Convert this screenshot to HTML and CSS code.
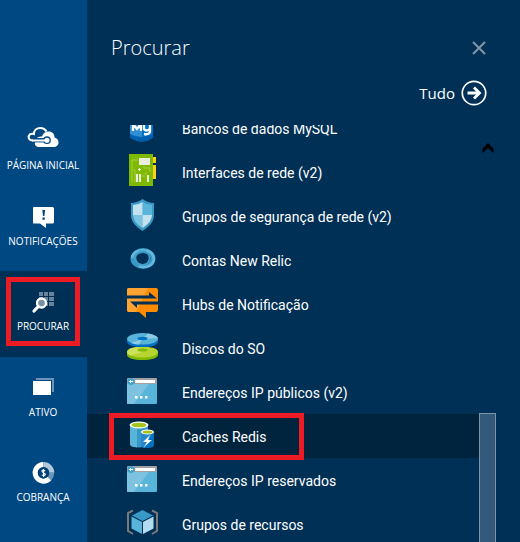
FILE: index.html
```html
<!DOCTYPE html>
<html lang="pt-BR">
<head>
<meta charset="utf-8">
<title>Procurar</title>
<link rel="stylesheet" href="styles.css">
</head>
<body>
<nav class="hub">
  <a class="hub-item first" href="#">
    <svg class="hub-icon" viewBox="0 0 34 24"><path d="M7 15.500C3 15.500 1.800 12.500 3 10.500C4 8.800 6 8.500 7.800 9C8 5 11 3 14.300 3C17 3 19 4 20.500 6.500" fill="none" stroke="#fff" stroke-width="2.200"/><path d="M13 22C9.500 22 8.500 19.500 9 17C9.500 12.500 13 11.500 16 11.500C17 8 19.500 6.500 22.500 6.500C26.500 6.500 28.500 9 28.500 12.500C31 13 32.500 15 32.500 17.500C32.500 20 30.500 22 27.500 22Z" fill="#fff"/><path d="M8 15.200H19" stroke="#004882" stroke-width="4.400"/><circle cx="21" cy="15.200" r="3.200" fill="#fff" stroke="#004882" stroke-width="1.300"/><path d="M6 15.500H20" stroke="#fff" stroke-width="2"/></svg>
    <span>PÁGINA INICIAL</span>
  </a>
  <a class="hub-item" href="#">
    <svg class="hub-icon" viewBox="0 0 34 24"><path d="M7.500 2H26.500Q28 2 28 3.500V17Q28 18.500 26.500 18.500H20V23L14 18.500H7.500Q7 18.500 7 17V3.500Q7 2 7.500 2Z" fill="#fff"/><path d="M16.300 5h2.800l-.7 6h-1.400zM16.500 12.500h2.300v2.300h-2.300z" fill="#004882"/></svg>
    <span>NOTIFICAÇÕES</span>
  </a>
  <a class="hub-item active" href="#">
    <svg class="hub-icon" viewBox="0 0 34 24"><path d="M13 2h4v4h-4zM18 2h4v4h-4zM23 2h5v4h-5zM13 7h4v4h-4zM18 7h4v4h-4zM23 7h5v4h-5zM18 12h4v4h-4zM23 12h5v4h-5z" fill="#68849c"/><circle cx="15.500" cy="13" r="4.500" fill="#7891a6" stroke="#fff" stroke-width="2.300"/><path d="M12.300 16.500L8 21" stroke="#fff" stroke-width="3.200" stroke-linecap="round"/></svg>
    <span>PROCURAR</span>
  </a>
  <a class="hub-item" href="#">
    <svg class="hub-icon" viewBox="0 0 34 24"><path d="M10 2H28V16H26V4H10Z" fill="#6b93b8"/><path d="M7 5H25V19H7Z" fill="#fff"/></svg>
    <span>ATIVO</span>
  </a>
  <a class="hub-item" href="#">
    <svg class="hub-icon" viewBox="0 0 34 24"><g fill="none" stroke-width="5"><path d="M17.500 3.500A8.300 8.300 0 1 0 23.500 17.500" stroke="#fff"/><path d="M17.500 3.500A8.300 8.300 0 0 1 25.800 11.800" stroke="#b3c8da"/><path d="M25.800 11.800A8.300 8.300 0 0 1 23.500 17.500" stroke="#6b93b8"/></g><circle cx="17.500" cy="11.800" r="5.600" fill="#00407a"/><path d="M19.300 9.700Q16 8.400 16 10.300C16 11.900 19.300 11.600 19.300 13.400Q19 15 15.700 14M17.600 8V16" fill="none" stroke="#fff" stroke-width="1.200"/></svg>
    <span>COBRANÇA</span>
  </a>
</nav>
<main class="panel">
  <header class="panel-head">
    <h1>Procurar</h1>
    <button class="close" type="button" aria-label="Fechar"><svg viewBox="0 0 14 14"><path d="M1 1L13 13M13 1L1 13" stroke="#8296a8" stroke-width="2"/></svg></button>
  </header>
  <a class="all" href="#">Tudo
    <svg viewBox="0 0 26 26"><circle cx="13" cy="13" r="11.700" fill="none" stroke="#fff" stroke-width="1.700"/><path d="M6.500 13H18M13 7.500L18.500 13L13 18.500" fill="none" stroke="#fff" stroke-width="2.800"/></svg>
  </a>
  <div class="browser">
    <ul class="list">
      <li><a class="row" href="#"><svg viewBox="0 0 32 32"><path d="M4 6L16 1L27 6V25Q16 34 4 25Z" fill="#0072c6"/><path d="M4 6L16 1V29Q9 29 4 25Z" fill="#2f8fd4"/><path d="M4 22Q16 28 27 22V26Q16 33 4 26Z" fill="#0060b0"/><path d="M7 19V12L11 17L15 12V19M18 13V17Q20 20 24 17M24 13V20Q23 23 18 22" fill="none" stroke="#fff" stroke-width="2.300"/></svg><span>Bancos de dados MySQL</span></a></li>
      <li><a class="row" href="#"><svg viewBox="0 0 32 32"><path d="M26 1h4v6h-4zM26 9h4v14h-4z" fill="#fcd116"/><path d="M3-2H27V30H3Z" fill="#7fba00"/><path d="M6 26V4H12M9 26V14H7M18 10V12H24V16M20 16V19M14 20H19" fill="none" stroke="#a4cf42"/><path d="M13 2h11v7h-11zM10 18h2v8h-2zM13 18h2v8h-2zM21 19h2v7h-2zM12 13h3v1h-3zM13 12h1v3h-1z" fill="#e9eedf"/></svg><span>Interfaces de rede (v2)</span></a></li>
      <li><a class="row" href="#"><svg viewBox="0 0 32 32"><path d="M16.500-1Q22 3 28 3V15C28 23 22 27 16.500 31C11 27 5 23 5 15V3Q11 3 16.500-1Z" fill="#3999c6"/><path d="M16.500 2Q21 5 26 5V15H16.500Z" fill="#59b4d9"/><path d="M16.500 2Q12 5 7 5V15H16.500Z" fill="#c4e1ef"/><path d="M7 15H16.500V28Q7 22 7 15Z" fill="#7cc4e2"/><path d="M26 15H16.500V28Q26 22 26 15Z" fill="#c4e1ef"/></svg><span>Grupos de segurança de rede (v2)</span></a></li>
      <li><a class="row" href="#"><svg viewBox="0 0 32 32"><ellipse cx="17" cy="14.500" rx="10" ry="8" fill="none" stroke="#3999c6" stroke-width="5"/><path d="M6 14C7 7 15 5 21 7C27 8 29 14 27 18C25 23 18 24 13 22" fill="none" stroke="#66b8dc" stroke-width="2.500"/><circle cx="16.500" cy="14" r="7" fill="none" stroke="#429fce" stroke-width="1.500"/></svg><span>Contas New Relic</span></a></li>
      <li><a class="row" href="#"><svg viewBox="0 0 32 32"><path d="M3 0H30Q32 0 32 2V21Q32 24 30 24H20V30L13 24H3Q1 24 1 22V2Q1 0 3 0Z" fill="#ff8c00"/><path d="M3 0H22L10 24H3Q1 24 1 22V2Q1 0 3 0Z" fill="#ffa333"/><path d="M1 7.500H23V4L31 10.500H1ZM32 13.500H4L11 20V16.500H32Z" fill="#003056"/></svg><span>Hubs de Notificação</span></a></li>
      <li><a class="row" href="#"><svg viewBox="0 0 32 32"><path d="M1 20V23C1 26 8 28 16.500 28S32 26 32 23V20Z" fill="#7fba00"/><ellipse cx="16.500" cy="20" rx="15.500" ry="5.500" fill="#b8d432"/><path d="M16.500 20L5 23.500Q1 22 1 20Q2 16 11 15Z" fill="#cae35b"/><path d="M1 7V10C1 13 8 15 16.500 15S32 13 32 10V7Z" fill="#0072c6"/><ellipse cx="16.500" cy="6.800" rx="15.500" ry="5.800" fill="#59b4d9"/><path d="M16.500 7L22 1.500Q30 3 32 6ZM16.500 7L5 11Q9 12.500 13 12.500Z" fill="#8fcbe6"/><ellipse cx="16.500" cy="6.500" rx="5" ry="1.700" fill="#0072c6"/><ellipse cx="16.500" cy="18" rx="5" ry="1.500" fill="#7fba00"/></svg><span>Discos do SO</span></a></li>
      <li><a class="row" href="#"><svg viewBox="0 0 32 32"><path d="M1 8H31V27Q31 28 30 28H2Q1 28 1 27Z" fill="#59b4d9"/><path d="M1 8H23L8 28H2Q1 28 1 27Z" fill="#7dc3e1"/><path d="M2 2H30Q31 2 31 3V8H1V3Q1 2 2 2Z" fill="#a0a1a2"/><path d="M9 4h20v3h-20z" fill="#fff"/><circle cx="5" cy="5.500" r="3.500" fill="#3fa3d1"/><path d="M3 5.500H7M5 4L3.500 5.500L5 7" stroke="#fff" fill="none"/><path d="M9 20h2.500v2.500h-2.500zM14 20h2.500v2.500h-2.500zM19 20h2.500v2.500h-2.500z" fill="#fff"/></svg><span>Endereços IP públicos (v2)</span></a></li>
      <li><a class="row selected" href="#"><svg viewBox="0 0 32 32"><path d="M4 5V24Q4 27 13 27.500Q22 27 22 24V5Z" fill="#3999c6"/><path d="M4 5V24Q4 27 11 27.500V5Z" fill="#59b4d9"/><ellipse cx="13" cy="5" rx="9.500" ry="3.500" fill="#fff"/><ellipse cx="13" cy="5" rx="7.500" ry="2.300" fill="#a3c51a"/><path d="M15 12V25Q16 28 21 28Q28 28 28 25V12Z" fill="#0072c6"/><path d="M15 12V25Q15 28 19 28L27 12Z" fill="#2787d0"/><ellipse cx="21.500" cy="12" rx="6.500" ry="2.500" fill="#fff"/><ellipse cx="21.500" cy="12" rx="5" ry="1.500" fill="#a3c51a"/><path d="M24 15L17 22H21L18 27L26 20H22Z" fill="#fff"/></svg><span>Caches Redis</span></a></li>
      <li><a class="row" href="#"><svg viewBox="0 0 32 32"><path d="M1 8H31V27Q31 28 30 28H2Q1 28 1 27Z" fill="#59b4d9"/><path d="M1 8H23L8 28H2Q1 28 1 27Z" fill="#7dc3e1"/><path d="M2 2H30Q31 2 31 3V8H1V3Q1 2 2 2Z" fill="#a0a1a2"/><path d="M9 4h20v3h-20z" fill="#fff"/><circle cx="5" cy="5.500" r="3.500" fill="#3fa3d1"/><path d="M3 5.500H7M5 4L3.500 5.500L5 7" stroke="#fff" fill="none"/><path d="M9 20h2.500v2.500h-2.500zM14 20h2.500v2.500h-2.500zM19 20h2.500v2.500h-2.500z" fill="#fff"/></svg><span>Endereços IP reservados</span></a></li>
      <li><a class="row" href="#"><svg viewBox="0 0 32 32"><path d="M7 2.500L2 5V23L7 26M26 2.500L31 5V23L26 26" fill="none" stroke="#7a7a7a" stroke-width="2"/><path d="M16.500 2L27 7.500L16.500 13L6 7.500Z" fill="#3999c6"/><path d="M5.500 8.500L16 14V26L5.500 20.500Z" fill="#59b4d9"/><path d="M27.500 8.500L17 14V26L27.500 20.500Z" fill="#b5dcee"/></svg><span>Grupos de recursos</span></a></li>
    </ul>
    <div class="track">
      <button class="up" type="button" aria-label="Rolar para cima"><svg viewBox="0 0 12 10"><path d="M6 0L11.500 5.500V10L6 5L.5 10V5.500Z" fill="#000"/></svg></button>
      <div class="thumb"></div>
    </div>
  </div>
</main>
</body>
</html>
```
FILE: styles.css
```css
*,
*::after {
  box-sizing: border-box;
}

body {
  margin: 0;
  height: 100vh;
  display: flex;
  overflow: hidden;
  background: #003056;
  color: #fff;
  font-family: "Open Sans", "Noto Sans", sans-serif;
}

a {
  color: inherit;
  text-decoration: none;
}

button {
  padding: 0;
  border: 0;
  background: none;
}

svg {
  display: block;
  overflow: visible;
}

.hub {
  flex: 0 0 87px;
  display: flex;
  flex-direction: column;
  padding-top: 110px;
  background: #004882;
}

.hub-item {
  position: relative;
  flex: 0 0 85px;
  display: flex;
  flex-direction: column;
  align-items: center;
  gap: 4px;
  padding: 19px 1px 0 0;
  font-size: 10px;
  line-height: 16px;
  white-space: nowrap;
}

.hub-item.first {
  flex-basis: 76px;
  padding-top: 15px;
  gap: 8px;
}

.hub-item.active {
  flex-basis: 86px;
  background: #003056;
}

.hub-item.active::after {
  content: "";
  position: absolute;
  inset: 6px 7px 11px 6px;
  border: 5px solid #ed1c24;
}

.hub-icon {
  width: 34px;
  height: 24px;
}

.panel {
  flex: 1;
  min-width: 0;
  display: flex;
  flex-direction: column;
  padding: 32px 24px 0 0;
}

.panel-head {
  display: flex;
  align-items: center;
  justify-content: space-between;
  padding: 0 10px 0 24px;
}

h1 {
  margin: 0;
  font-size: 20px;
  font-weight: 300;
  line-height: 32px;
}

.close,
.close svg {
  width: 14px;
  height: 14px;
}

.all {
  align-self: flex-end;
  display: flex;
  align-items: center;
  gap: 6px;
  margin: 16px 9px 19px 0;
  font-size: 15px;
  line-height: 26px;
}

.all svg {
  width: 26px;
  height: 26px;
}

.browser {
  flex: 1;
  min-height: 0;
  display: flex;
  overflow: hidden;
}

.list {
  flex: 1;
  margin: -19px 0 0;
  padding: 0;
  list-style: none;
}

.row {
  position: relative;
  display: flex;
  align-items: center;
  gap: 24px;
  height: 44px;
  padding-left: 39px;
  font-family: Roboto, "Open Sans", sans-serif;
  font-size: 14px;
  white-space: nowrap;
}

.row span {
  padding-top: 2px;
}

.row svg {
  flex: none;
  width: 32px;
  height: 32px;
}

.row.selected {
  background: #00243d;
}

.row.selected::after {
  content: "";
  position: absolute;
  inset: -1px auto -2px 22px;
  width: 195px;
  border: 5px solid #ed1c24;
}

.track {
  flex: 0 0 17px;
  display: flex;
  flex-direction: column;
}

.up {
  flex: none;
  padding: 18px 2px 10px 3px;
}

.up svg {
  width: 12px;
  height: 10px;
}

.thumb {
  flex: 1;
  margin-top: 250px;
  border: 1px solid #7d93a6;
  border-bottom: 0;
  background: #335a7a;
}
```
